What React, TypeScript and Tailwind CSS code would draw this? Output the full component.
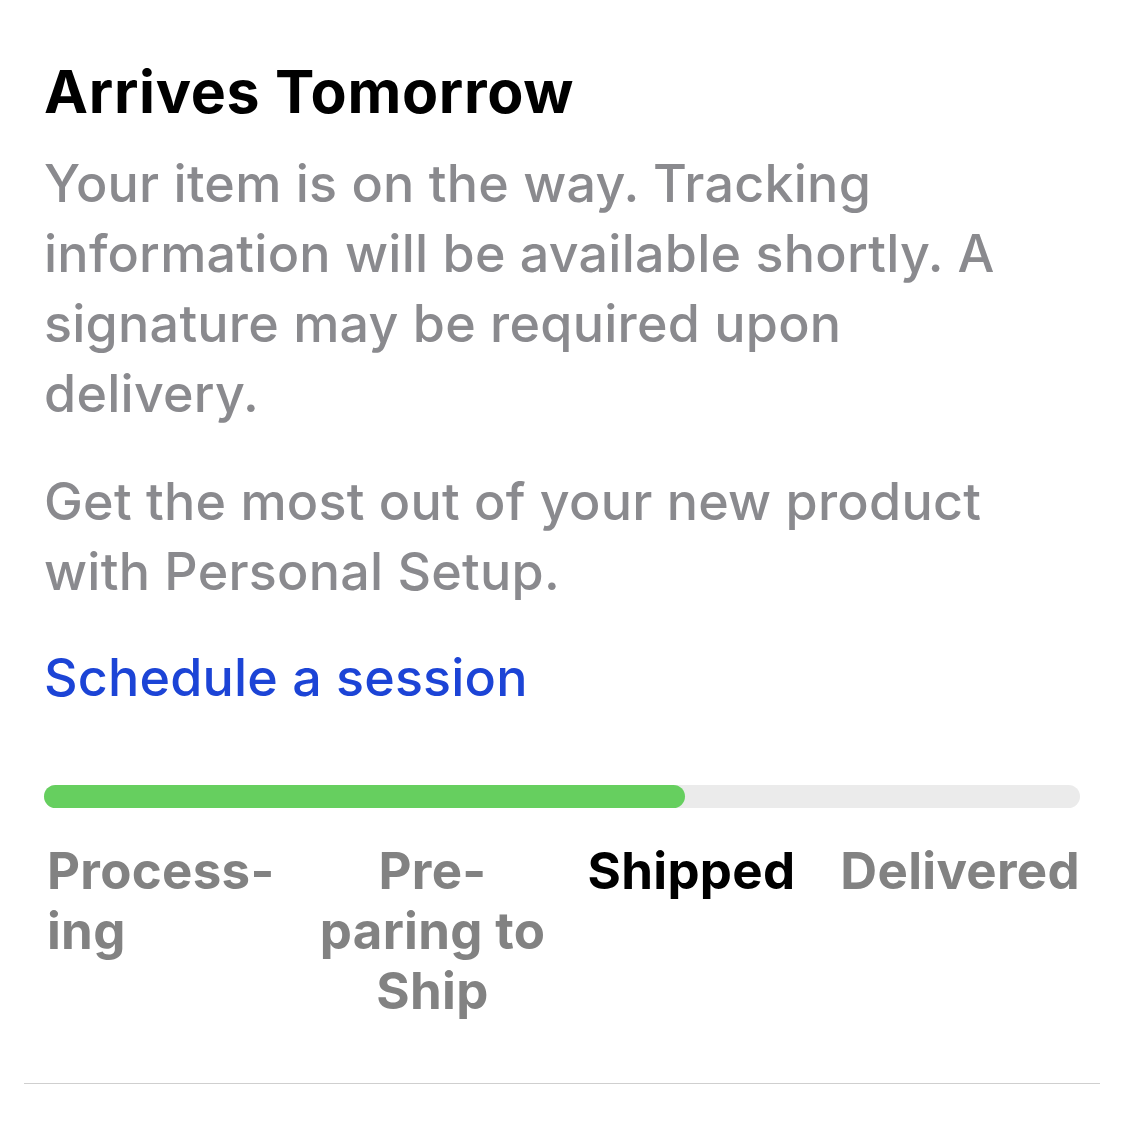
import React from "react";

export default function App() {
  return (
    <div className="min-h-[1142px] w-[1124px] bg-white" style={{ fontFamily: "Inter, 'Noto Sans', sans-serif" }}>
      <div className="px-[44px] pt-[56px]">
        <h1 className="text-[59px] leading-[72px] font-bold text-black tracking-[0.7px]">Arrives Tomorrow</h1>
        <p className="mt-[21px] text-[52px] leading-[70px] font-medium text-[#8a8a8e] tracking-[0.25px]">
          Your item is on the way. Tracking<br />
          information will be available shortly. A<br />
          signature may be required upon<br />
          delivery.
        </p>
        <p className="mt-[38px] text-[52px] leading-[70px] font-medium text-[#8a8a8e] tracking-[0.25px]">
          Get the most out of your new product<br />
          with Personal Setup.
        </p>
        <div className="mt-[36px] text-[52px] leading-[70px] font-medium text-[#1c44d6] tracking-[0.2px]">Schedule a session</div>
        <div className="mt-[72px] h-[23px] w-[1036px] rounded-full bg-[#ebebeb]">
          <div className="h-full w-[641px] rounded-full bg-[#66cf5f]" />
        </div>
        <div className="mt-[33px] grid w-[1036px] grid-cols-4 text-[51px] leading-[60px] font-bold tracking-[0.3px]">
          <div className="pl-[3px] text-left text-[#828282]">Process-<br />ing</div>
          <div className="text-center text-[#828282]">Pre-<br />paring to<br />Ship</div>
          <div className="text-center text-black">Shipped</div>
          <div className="text-right text-[#828282]">Delivered</div>
        </div>
      </div>
      <div className="mx-[24px] mt-[62px] h-[1px] bg-[#cfcfcf]" />
    </div>
  );
}
